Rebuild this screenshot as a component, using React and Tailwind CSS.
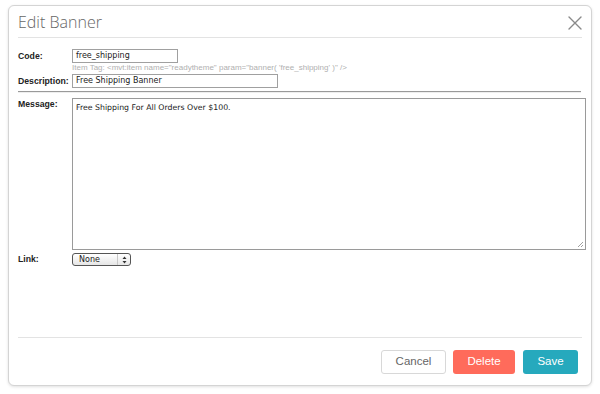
import React from "react";

function Label({ children, lh = "leading-[14px]" }) {
  return (
    <div className={"w-[54px] shrink-0 font-bold text-[8.7px] text-[#222] " + lh}>
      {children}
    </div>
  );
}

export default function App() {
  return (
    <div className="w-[600px] h-[394px] bg-white pt-[5px] pl-[8px]" style={{ fontFamily: '"Liberation Sans", Arial, sans-serif' }}>
      <div className="w-[584px] h-[381px] rounded-[6px] border border-[#d4d4d4] bg-white shadow-[0_1px_3px_rgba(0,0,0,0.12)] flex flex-col px-[9px]">
        {/* Header */}
        <div className="h-[32px] shrink-0 border-b border-[#e3e3e3] flex items-center justify-between">
          <h1 className="text-[16px] font-light text-[#666] leading-none pt-[1px]" style={{ fontFamily: '"Open Sans", sans-serif' }}>
            Edit Banner
          </h1>
          <svg width="14" height="14" viewBox="0 0 14 14" className="mr-0 mt-[2px]">
            <path d="M1 1 L13 13 M13 1 L1 13" stroke="#8a8a8a" strokeWidth="1.4" strokeLinecap="round" />
          </svg>
        </div>

        {/* Body */}
        <div className="flex-1 flex flex-col pt-[11px]">
          <div className="flex items-start">
            <Label>Code:</Label>
            <div className="flex flex-col">
              <div className="w-[106px] h-[14px] border border-[#a0a0a0] flex items-center px-[3px] text-[8px] text-[#222]" style={{ fontFamily: '"DejaVu Sans", sans-serif' }}>
                free_shipping
              </div>
              <div className="text-[8px] leading-[10px] text-[#b0b0b0] whitespace-nowrap">
                Item Tag: &lt;mvt:item name="readytheme" param="banner( 'free_shipping' )" /&gt;
              </div>
            </div>
          </div>
          <div className="flex items-start mt-[1px]">
            <Label>Description:</Label>
            <div className="w-[206px] h-[14px] border border-[#a0a0a0] flex items-center px-[3px] text-[8px] text-[#222]" style={{ fontFamily: '"DejaVu Sans", sans-serif' }}>
              Free Shipping Banner
            </div>
          </div>
          <div className="mt-[3px] h-[2px] border-t border-[#9a9a9a] border-b border-b-[#eeeeee] mr-[1px]" />
          <div className="flex items-start mt-[5px]">
            <Label lh="leading-[12px]">Message:</Label>
            <div className="relative shrink-0 w-[514px] h-[152px] border border-[#9a9a9a] px-[3px] pt-[4px] text-[7.8px] text-[#222] leading-[10px]" style={{ fontFamily: '"DejaVu Sans", sans-serif' }}>
              Free Shipping For All Orders Over $100.
              <svg width="7" height="7" viewBox="0 0 7 7" className="absolute right-[1px] bottom-[1px]">
                <path d="M6 1 L1 6 M6 4 L4 6" stroke="#888" strokeWidth="0.8" />
              </svg>
            </div>
          </div>
          <div className="flex items-start mt-[3px]">
            <Label lh="leading-[13px]">Link:</Label>
            <div className="w-[59px] h-[13px] rounded-[3px] border border-[#555] bg-gradient-to-b from-white to-[#e6e6e6] flex items-center text-[8px] text-[#222] overflow-hidden" style={{ fontFamily: '"DejaVu Sans", sans-serif' }}>
              <span className="flex-1 pl-[6px]">None</span>
              <span className="w-[13px] h-full border-l border-[#c8c8c8] flex flex-col items-center justify-center">
                <svg width="5" height="8" viewBox="0 0 5 8">
                  <path d="M2.5 0.5 L4.5 3 L0.5 3 Z M2.5 7.5 L4.5 5 L0.5 5 Z" fill="#333" />
                </svg>
              </span>
            </div>
          </div>
        </div>

        {/* Footer */}
        <div className="h-[48px] shrink-0 border-t border-[#e3e3e3] flex items-start justify-end pt-[12px] pr-[4px]">
          <button className="w-[65px] h-[24px] rounded-[3px] border border-[#d8d8d8] bg-white text-[11.5px] text-[#666] mr-[7px]">Cancel</button>
          <button className="w-[62px] h-[24px] rounded-[3px] bg-[#ff6b5b] text-[11.5px] text-white mr-[8px]">Delete</button>
          <button className="w-[55px] h-[24px] rounded-[3px] bg-[#26a9bd] text-[11.5px] text-white">Save</button>
        </div>
      </div>
    </div>
  );
}
